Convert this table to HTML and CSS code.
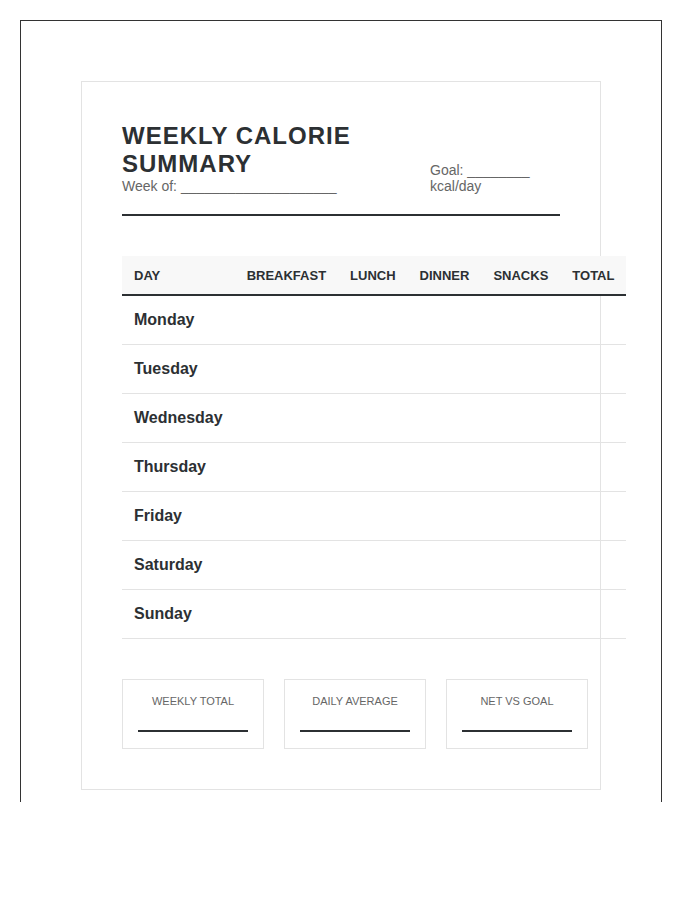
FILE: index.html
```html
<!DOCTYPE html>
<html>
<head>
<meta charset="utf-8">
<link rel="stylesheet" href="styles.css">
</head>
<body>
<div class="frame">
  <div class="card">
    <div class="header">
      <div class="title-block">
        <h1 class="title">WEEKLY CALORIE SUMMARY</h1>
        <div class="meta">Week of: ____________________</div>
      </div>
      <div class="goal meta">Goal: ________ kcal/day</div>
    </div>
    <table class="log">
      <thead>
        <tr><th>DAY</th><th>BREAKFAST</th><th>LUNCH</th><th>DINNER</th><th>SNACKS</th><th>TOTAL</th></tr>
      </thead>
      <tbody>
        <tr><td class="day">Monday</td><td></td><td></td><td></td><td></td><td></td></tr>
        <tr><td class="day">Tuesday</td><td></td><td></td><td></td><td></td><td></td></tr>
        <tr><td class="day">Wednesday</td><td></td><td></td><td></td><td></td><td></td></tr>
        <tr><td class="day">Thursday</td><td></td><td></td><td></td><td></td><td></td></tr>
        <tr><td class="day">Friday</td><td></td><td></td><td></td><td></td><td></td></tr>
        <tr><td class="day">Saturday</td><td></td><td></td><td></td><td></td><td></td></tr>
        <tr><td class="day">Sunday</td><td></td><td></td><td></td><td></td><td></td></tr>
      </tbody>
    </table>
    <div class="summary">
      <div class="box"><div class="label">WEEKLY TOTAL</div><div class="line"></div></div>
      <div class="box"><div class="label">DAILY AVERAGE</div><div class="line"></div></div>
      <div class="box"><div class="label">NET VS GOAL</div><div class="line"></div></div>
    </div>
  </div>
</div>
</body>
</html>
```
FILE: styles.css
```css
html, body {
  margin: 0;
  padding: 0;
  background: #fff;
}
body {
  font-family: "Liberation Sans", Arial, sans-serif;
  color: #2c3033;
}
.frame {
  margin: 20px 0 0 20px;
  width: 642px;
  height: 782px;
  border: 1px solid #333;
  border-bottom: none;
  padding-top: 60px;
  box-sizing: border-box;
}
.card {
  width: 438px;
  margin: 0 auto;
  padding: 40px;
  border: 1px solid #e3e3e3;
}
.header {
  display: flex;
  justify-content: space-between;
  align-items: flex-end;
  padding-bottom: 20px;
  border-bottom: 2px solid #2c3033;
}
.title-block {
  flex: 1;
}
.title {
  margin: 0;
  font-size: 24px;
  line-height: 28px;
  font-weight: bold;
  letter-spacing: 1px;
  color: #2c3033;
}
.meta {
  font-size: 14px;
  line-height: 16px;
  color: #666;
}
.goal {
  width: 130px;
}
.log {
  margin-top: 40px;
  border-collapse: separate;
  border-spacing: 0;
}
.log th {
  text-align: left;
  padding: 13px 12px 11px;
  font-size: 13px;
  line-height: 14px;
  font-weight: bold;
  color: #2c3033;
  background: #f8f8f8;
  border-bottom: 2px solid #2c3033;
}
.log td {
  padding: 12px;
  font-size: 16px;
  line-height: 24px;
  border-bottom: 1px solid #e3e3e3;
}
.log td.day {
  font-weight: bold;
  color: #2c3033;
}
.summary {
  display: flex;
  gap: 20px;
  margin-top: 40px;
}
.box {
  flex: 1;
  padding: 15px 15px 16px;
  border: 1px solid #e3e3e3;
  text-align: center;
}
.label {
  font-size: 11px;
  line-height: 13px;
  color: #666;
}
.line {
  width: 110px;
  height: 2px;
  margin: 22px auto 0;
  background: #2c3033;
}
```
